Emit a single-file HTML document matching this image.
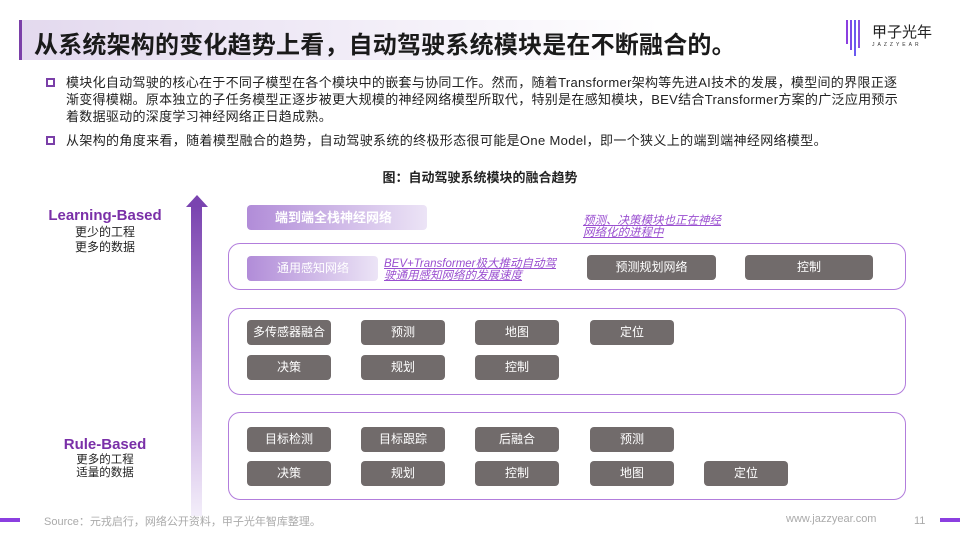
<!DOCTYPE html>
<html><head><meta charset="utf-8"><style>
*{margin:0;padding:0;box-sizing:border-box}
body{width:960px;height:540px;background:#fff;position:relative;overflow:hidden;font-family:"Liberation Sans","Noto Sans CJK SC",sans-serif;color:#222}
.a{position:absolute}
.title{left:19px;top:20px;width:640px;height:40px;background:linear-gradient(90deg,#e3d9ee 0%,#f1ecf7 50%,#fff 100%);border-left:3px solid #7a3fa8}
.title span{position:absolute;left:12px;top:5px;font-size:24px;font-weight:bold;color:#1a1a1a;white-space:nowrap;letter-spacing:0.2px}
.bul{font-size:13px;line-height:17px;color:#222;white-space:nowrap;letter-spacing:0.3px}
.sq{position:absolute;width:9px;height:9px;border:2px solid #7a3fa8}
.g{position:absolute;background:#716b6b;color:#fff;font-size:12px;border-radius:4px;text-align:center;line-height:25px;width:84px;height:25px}
.box{position:absolute;border:1.5px solid #b27ddc;border-radius:12px}
.it{position:absolute;font-style:italic;color:#9a4fd0;font-size:11.5px;line-height:12px;text-decoration:underline}
</style></head><body>
<div class="a title"><span>从系统架构的变化趋势上看，自动驾驶系统模块是在不断融合的。</span></div>
<div class="a" style="left:846px;top:20px;width:18px;height:36px">
<div class="a" style="left:0;top:0;width:2px;height:24px;background:#8b3fe0"></div>
<div class="a" style="left:4px;top:0;width:2px;height:30px;background:#7b4ae8"></div>
<div class="a" style="left:8px;top:0;width:2px;height:36px;background:#6b5af0"></div>
<div class="a" style="left:12px;top:0;width:2px;height:28px;background:#8a50e0"></div>
</div>
<div class="a" style="left:872px;top:21px;font-size:15px;color:#222">甲子光年</div>
<div class="a" style="left:872px;top:42px;font-size:5px;letter-spacing:3px;color:#333">JAZZYEAR</div>

<div class="sq" style="left:46px;top:78px"></div>
<div class="a bul" style="left:66px;top:74px">模块化自动驾驶的核心在于不同子模型在各个模块中的嵌套与协同工作。然而，随着Transformer架构等先进AI技术的发展，模型间的界限正逐<br>渐变得模糊。原本独立的子任务模型正逐步被更大规模的神经网络模型所取代，特别是在感知模块，BEV结合Transformer方案的广泛应用预示<br>着数据驱动的深度学习神经网络正日趋成熟。</div>
<div class="sq" style="left:46px;top:136px"></div>
<div class="a bul" style="left:66px;top:132px;letter-spacing:0.35px">从架构的角度来看，随着模型融合的趋势，自动驾驶系统的终极形态很可能是One Model，即一个狭义上的端到端神经网络模型。</div>

<div class="a" style="left:0;width:960px;top:167px;text-align:center;font-size:13px;font-weight:bold;color:#222">图：自动驾驶系统模块的融合趋势</div>

<div class="a" style="left:191px;top:206px;width:11px;height:310px;background:linear-gradient(180deg,#7a44b0,#c8a9e0 60%,#f3eefa)"></div>
<div class="a" style="left:186px;top:195px;width:0;height:0;border-left:11px solid transparent;border-right:11px solid transparent;border-bottom:12px solid #7a44b0"></div>

<div class="a" style="left:40px;top:207px;width:130px;text-align:center;font-size:15px;font-weight:bold;color:#7a30a8">Learning-Based</div>
<div class="a" style="left:40px;top:225px;width:130px;text-align:center;font-size:12px;line-height:15px">更少的工程<br>更多的数据</div>
<div class="a" style="left:40px;top:436px;width:130px;text-align:center;font-size:15px;font-weight:bold;color:#7a30a8">Rule-Based</div>
<div class="a" style="left:40px;top:454px;width:130px;text-align:center;font-size:11.5px;line-height:13px">更多的工程<br>适量的数据</div>

<div class="a" style="left:247px;top:205px;width:180px;height:25px;border-radius:4px;background:linear-gradient(90deg,#b18cd8,#ece4f6);color:#fff;font-size:13px;font-weight:bold;line-height:25px;padding-left:28px">端到端全栈神经网络</div>
<div class="it" style="left:583px;top:215px">预测、决策模块也正在神经<br>网络化的进程中</div>

<div class="box" style="left:228px;top:243px;width:678px;height:47px"></div>
<div class="a" style="left:247px;top:256px;width:131px;height:25px;border-radius:4px;background:linear-gradient(90deg,#b18cd8,#ece4f6);color:#fff;font-size:12px;line-height:25px;padding-left:30px">通用感知网络</div>
<div class="it" style="left:384px;top:258px">BEV+Transformer极大推动自动驾<br>驶通用感知网络的发展速度</div>
<div class="g" style="left:587px;top:255px;width:129px">预测规划网络</div>
<div class="g" style="left:745px;top:255px;width:128px">控制</div>

<div class="box" style="left:228px;top:308px;width:678px;height:87px"></div>
<div class="g" style="left:247px;top:320px">多传感器融合</div>
<div class="g" style="left:361px;top:320px">预测</div>
<div class="g" style="left:475px;top:320px">地图</div>
<div class="g" style="left:590px;top:320px">定位</div>
<div class="g" style="left:247px;top:355px">决策</div>
<div class="g" style="left:361px;top:355px">规划</div>
<div class="g" style="left:475px;top:355px">控制</div>

<div class="box" style="left:228px;top:412px;width:678px;height:88px"></div>
<div class="g" style="left:247px;top:427px">目标检测</div>
<div class="g" style="left:361px;top:427px">目标跟踪</div>
<div class="g" style="left:475px;top:427px">后融合</div>
<div class="g" style="left:590px;top:427px">预测</div>
<div class="g" style="left:247px;top:461px">决策</div>
<div class="g" style="left:361px;top:461px">规划</div>
<div class="g" style="left:475px;top:461px">控制</div>
<div class="g" style="left:590px;top:461px">地图</div>
<div class="g" style="left:704px;top:461px">定位</div>

<div class="a" style="left:0;top:518px;width:20px;height:4px;background:#8b3fe0"></div>
<div class="a" style="left:940px;top:518px;width:20px;height:4px;background:#8b3fe0"></div>
<div class="a" style="left:44px;top:513px;font-size:11px;color:#aaa">Source：元戎启行，网络公开资料，甲子光年智库整理。</div>
<div class="a" style="left:786px;top:513px;font-size:11px;color:#aaa">www.jazzyear.com</div>
<div class="a" style="left:914px;top:515px;font-size:11px;color:#aaa">11</div>
</body></html>
